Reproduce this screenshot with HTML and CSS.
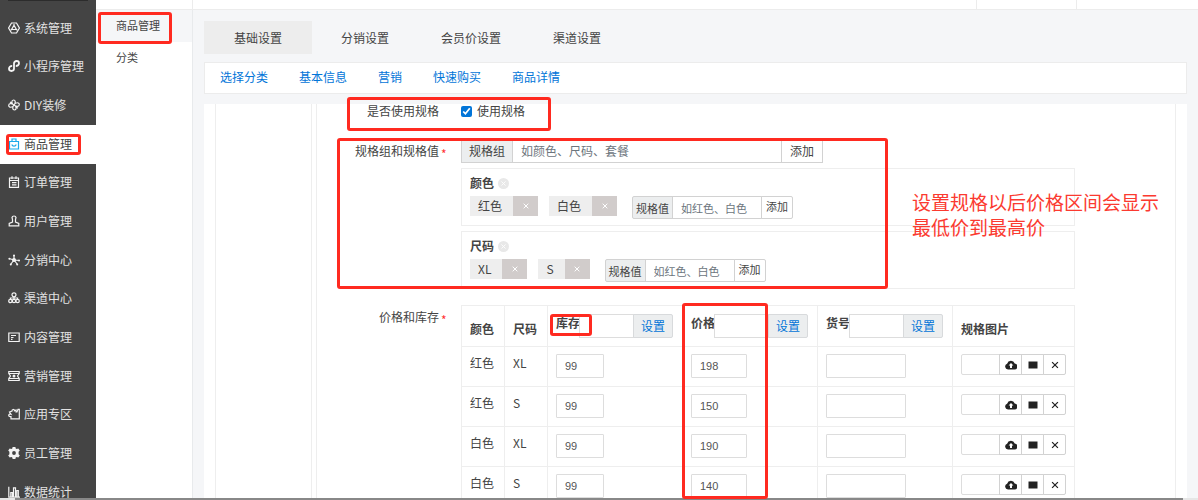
FILE: index.html
```html
<!DOCTYPE html>
<html lang="zh-CN">
<head>
<meta charset="utf-8">
<title>商品管理</title>
<link rel="stylesheet" href="styles.css">
</head>
<body>
<svg class="sprite" aria-hidden="true">
  <symbol id="i-upload" viewBox="0 0 12 12"><path fill="currentColor" fill-rule="evenodd" d="M3 10.500a3 3 0 0 1-.9-5.800A4 4 0 0 1 9.700 4.500 3 3 0 0 1 9 10.500zM6 4 3.600 6.600H5V9H7V6.600H8.400z"/></symbol>
  <symbol id="i-image" viewBox="0 0 12 12"><path fill="currentColor" d="M1.500 2.500h9v7h-9z"/></symbol>
  <symbol id="i-x" viewBox="0 0 12 12"><path fill="none" stroke="currentColor" stroke-width="1.500" d="M2.500 2.500l7 7M9.500 2.500l-7 7"/></symbol>
</svg>
<div class="page">
  <div class="app">
    <nav class="sidebar" aria-label="主菜单">
      <div class="side-cap"></div>
      <ul class="menu">
        <li><a href="#"><svg viewBox="0 0 12 12"><path d="M3.500 1h5L11.400 6 8.500 11h-5L.6 6z"/><path d="M6 3.200 8.400 7.500H3.600zM6 2v2M2.600 8.300l1.600-1.300M9.400 8.300l-1.600-1.300"/></svg>系统管理</a></li>
        <li><a href="#"><svg class="bold" viewBox="0 0 12 12"><path d="M4.200 5.800C2.400 5.800 1 6.900 1 8.600s1.300 2.400 2.400 2.400C5 11 6 10 6 8.600V3.400C6 2 7.200 1 8.600 1S11 2 11 3.300c0 1.500-1.400 2.700-3.200 2.700"/></svg>小程序管理</a></li>
        <li><a href="#"><svg viewBox="0 0 12 12"><path d="M6 6C3 4.500 3.500 1 5.500 1S8 3.500 6 6c1.500-3 5.300-2.800 5.300-.5S8.500 8 6 6c3 1.500 2.500 5 .5 5S4 8.500 6 6C4.500 9 .7 8.800.7 6.500S3.500 4 6 6M2 3l2 1.200M10 9.200 8 8"/></svg>DIY装修</a></li>
        <li><a class="active" href="#"><svg viewBox="0 0 12 12"><path d="M1.500 3.500h9v7.500h-9zM4 3.500V1h4v2.500M3.800 6.500c.6 2.200 3.800 2.200 4.400 0"/></svg>商品管理</a></li>
        <li><a href="#"><svg viewBox="0 0 12 12"><path d="M1.500 2h9v9.300h-9zM4 .3v2.700M8 .3v2.700M1.500 4.500h9M4 6.700h4.500M4 8.900h4.500"/></svg>订单管理</a></li>
        <li><a href="#"><svg viewBox="0 0 12 12"><path d="M4.500 7V4.500L4 2.500C4.500.5 7.500.5 8 2.500L7.500 4.500V7L10.800 8.500V10.800H1.200V8.500z"/></svg>用户管理</a></li>
        <li><a href="#"><svg viewBox="0 0 12 12"><path d="M6 1v5M6 6 1 4.500M6 6l-3.500 4.500M6 6l3.500 4.500M6 6l5.500.5"/><circle class="fill" cx="6" cy="6" r="2"/><circle class="fill" cx="6" cy="1.500" r="1"/><circle class="fill" cx="1.400" cy="4.700" r="1"/><circle class="fill" cx="2.800" cy="10.500" r="1"/><circle class="fill" cx="9.200" cy="10.500" r="1"/><circle class="fill" cx="11" cy="6.500" r="1"/></svg>分销中心</a></li>
        <li><a href="#"><svg viewBox="0 0 12 12"><circle cx="6" cy="2.800" r="2"/><circle cx="2.400" cy="9" r="1.700"/><circle cx="6" cy="9" r="1.700"/><circle cx="9.600" cy="9" r="1.700"/><path d="M6 5v2M2.400 7V6h7.200v1"/></svg>渠道中心</a></li>
        <li><a href="#"><svg viewBox="0 0 12 12"><path d="M.8 2h10.400v8.500H.8zM3 4.500h5M3 6.500h2.500M3 8.300h1.500"/></svg>内容管理</a></li>
        <li><a href="#"><svg viewBox="0 0 12 12"><path d="M.8 1.500h10.400v2L9.500 6l1.700 2.500v2H.8v-2L2.500 6 .8 3.500zM1 3.500h10M1 8.500h10"/><circle class="fill" cx="6" cy="6" r="1.500"/></svg>营销管理</a></li>
        <li><a href="#"><svg viewBox="0 0 12 12"><path d="M3 10.800V8.500C1.500 9 .5 8 .8 7S2 6 3 6.300L1.500 4 4 3c0-2 2.500-2 2.500-.2L8 2V4h1l1-2.700h1.300v9.500z"/></svg>应用专区</a></li>
        <li><a href="#"><svg viewBox="0 0 12 12"><path class="fill" fill-rule="evenodd" d="M4.600 0h2.800l.3 1.600 1 .5 1.600-.7 1.500 2.200-1.200 1.200v2.400l1.200 1.200-1.500 2.200-1.600-.7-1 .5-.3 1.600H4.600l-.3-1.600-1-.5-1.600.7L.2 8.400l1.200-1.200V4.800L.2 3.600l1.500-2.200 1.600.7 1-.5zM6 4.100a1.900 1.900 0 1 0 0 3.800 1.900 1.900 0 0 0 0-3.800z"/></svg>员工管理</a></li>
        <li><a href="#"><svg viewBox="0 0 12 12"><path d="M.8.8v10.400H12M2.800 11V6.500h1.500V11M5.500 11V1.800h2V11M8.800 11V4.500h1.500V11"/></svg>数据统计</a></li>
      </ul>
    </nav>
    <div class="workspace">
      <header class="topbar"><div class="top-a"></div><div class="top-b"></div><div class="top-c"></div><div class="top-d"></div></header>
      <div class="body">
        <nav class="subnav" aria-label="商品">
          <a class="current" href="#">商品管理</a>
          <a href="#">分类</a>
        </nav>
        <main class="main">
          <nav class="tabs" aria-label="设置">
            <a class="current" href="#">基础设置</a><a href="#">分销设置</a><a href="#">会员价设置</a><a href="#">渠道设置</a>
          </nav>
          <nav class="anchors" aria-label="分区">
            <a href="#">选择分类</a><a href="#">基本信息</a><a href="#">营销</a><a href="#">快速购买</a><a href="#">商品详情</a>
          </nav>
          <div class="panel">
            <div class="panel-side"></div>
            <form class="form">
              <div class="row row-use">
                <span class="label">是否使用规格</span>
                <label class="check"><input type="checkbox" checked>使用规格</label>
              </div>
              <div class="row row-spec">
                <label class="label required" for="group">规格组和规格值</label>
                <div class="field">
                  <div class="group group-main">
                    <span class="addon">规格组</span><input id="group" type="text" placeholder="如颜色、尺码、套餐"><button type="button">添加</button>
                  </div>
                  <section class="spec">
                    <h3>颜色<button type="button" class="remove" aria-label="删除颜色"><svg><use href="#i-x"/></svg></button></h3>
                    <div class="values">
                      <span class="tag"><span>红色</span><button type="button" aria-label="删除红色"><svg><use href="#i-x"/></svg></button></span>
                      <span class="tag"><span>白色</span><button type="button" aria-label="删除白色"><svg><use href="#i-x"/></svg></button></span>
                      <div class="group group-value"><label class="addon" for="v1">规格值</label><input id="v1" type="text" placeholder="如红色、白色"><button type="button">添加</button></div>
                    </div>
                  </section>
                  <section class="spec">
                    <h3>尺码<button type="button" class="remove" aria-label="删除尺码"><svg><use href="#i-x"/></svg></button></h3>
                    <div class="values">
                      <span class="tag"><span>XL</span><button type="button" aria-label="删除XL"><svg><use href="#i-x"/></svg></button></span>
                      <span class="tag"><span>S</span><button type="button" aria-label="删除S"><svg><use href="#i-x"/></svg></button></span>
                      <div class="group group-value"><label class="addon" for="v2">规格值</label><input id="v2" type="text" placeholder="如红色、白色"><button type="button">添加</button></div>
                    </div>
                  </section>
                </div>
              </div>
              <div class="row">
                <span class="label required">价格和库存</span>
                <div class="field">
                  <table class="stock">
                    <colgroup><col class="c-spec"><col class="c-spec"><col class="c-set"><col class="c-set"><col class="c-set"><col></colgroup>
                    <thead>
                      <tr>
                        <th>颜色</th><th>尺码</th>
                        <th><div class="batch"><label for="b1">库存</label><input id="b1" type="text"><button type="button">设置</button></div></th>
                        <th><div class="batch"><label for="b2">价格</label><input id="b2" type="text"><button type="button">设置</button></div></th>
                        <th><div class="batch"><label for="b3">货号</label><input id="b3" type="text"><button type="button">设置</button></div></th>
                        <th>规格图片</th>
                      </tr>
                    </thead>
                    <tbody>
                      <tr><td>红色</td><td>XL</td><td><input class="w-stock" aria-label="库存" value="99"></td><td><input class="w-price" aria-label="价格" value="198"></td><td><input class="w-sku" aria-label="货号"></td><td><div class="pic"><input aria-label="规格图片"><button type="button" aria-label="上传"><svg><use href="#i-upload"/></svg></button><button type="button" aria-label="选择图片"><svg><use href="#i-image"/></svg></button><button type="button" aria-label="清除"><svg><use href="#i-x"/></svg></button></div></td></tr>
                      <tr><td>红色</td><td>S</td><td><input class="w-stock" aria-label="库存" value="99"></td><td><input class="w-price" aria-label="价格" value="150"></td><td><input class="w-sku" aria-label="货号"></td><td><div class="pic"><input aria-label="规格图片"><button type="button" aria-label="上传"><svg><use href="#i-upload"/></svg></button><button type="button" aria-label="选择图片"><svg><use href="#i-image"/></svg></button><button type="button" aria-label="清除"><svg><use href="#i-x"/></svg></button></div></td></tr>
                      <tr><td>白色</td><td>XL</td><td><input class="w-stock" aria-label="库存" value="99"></td><td><input class="w-price" aria-label="价格" value="190"></td><td><input class="w-sku" aria-label="货号"></td><td><div class="pic"><input aria-label="规格图片"><button type="button" aria-label="上传"><svg><use href="#i-upload"/></svg></button><button type="button" aria-label="选择图片"><svg><use href="#i-image"/></svg></button><button type="button" aria-label="清除"><svg><use href="#i-x"/></svg></button></div></td></tr>
                      <tr><td>白色</td><td>S</td><td><input class="w-stock" aria-label="库存" value="99"></td><td><input class="w-price" aria-label="价格" value="140"></td><td><input class="w-sku" aria-label="货号"></td><td><div class="pic"><input aria-label="规格图片"><button type="button" aria-label="上传"><svg><use href="#i-upload"/></svg></button><button type="button" aria-label="选择图片"><svg><use href="#i-image"/></svg></button><button type="button" aria-label="清除"><svg><use href="#i-x"/></svg></button></div></td></tr>
                    </tbody>
                  </table>
                </div>
              </div>
            </form>
          </div>
        </main>
      </div>
    </div>
  </div>
  <div class="hscroll"><div class="thumb"></div></div>

  <div class="mark mark-subnav"></div>
  <div class="mark mark-menu"></div>
  <div class="mark mark-use"></div>
  <div class="mark mark-spec"></div>
  <div class="mark mark-stock"></div>
  <div class="mark mark-price"></div>
  <p class="note">设置规格以后价格区间会显示<br>最低价到最高价</p>
</div>
</body>
</html>
```
FILE: styles.css
```css
* { box-sizing: border-box; }

body {
  margin: 0;
  font: 12px/14px "Noto Sans CJK SC", "Liberation Sans", sans-serif;
  color: #444;
  background: #fff;
}

a { color: inherit; text-decoration: none; }
ul { list-style: none; margin: 0; padding: 0; }
input, button { font: inherit; color: inherit; margin: 0; padding: 0; border-radius: 0; min-width: 0; }
button { background: #fff; border: 1px solid #ccc; }
input { background: #fff; border: 1px solid #ddd; }
input::placeholder { color: #6c757d; opacity: 1; }
svg { display: block; width: 12px; height: 12px; }
.sprite { position: absolute; width: 0; height: 0; }

.page {
  position: relative;
  display: flex;
  flex-direction: column;
  height: 100vh;
  overflow: hidden;
}
.app { display: flex; flex: 1; min-height: 0; overflow: hidden; }

/* Dark main menu */
.sidebar { flex: none; width: 96px; background: #444; }
.side-cap { height: 1px; margin: 0 8px 8px; background: #2c2c2c; }
.menu { display: grid; grid-auto-rows: 39px 38px 39px; }
.menu a {
  display: flex;
  align-items: center;
  gap: 4px;
  height: 100%;
  padding: 0 0 2px 8px;
  color: #e2e2e2;
  white-space: nowrap;
}
.menu svg { flex: none; fill: none; stroke: currentColor; stroke-width: 1.2; color: #f4f4f4; }
.menu .bold { stroke-width: 1.8; }
.menu .fill { fill: currentColor; stroke: none; }
.menu .active { background: #fff; color: #444; }
.menu .active svg { color: #1ba9ea; }

.workspace { display: flex; flex-direction: column; flex: 1; min-width: 0; }
.topbar { display: flex; flex: none; height: 10px; border-bottom: 1px solid #ececec; }
.topbar > div { border-right: 1px solid #ececec; }
.topbar .top-a { width: 97px; }
.topbar .top-b { flex: 1; }
.topbar .top-c { width: 100px; }
.topbar .top-d { width: 121px; border: 0; }
.body { display: flex; flex: 1; min-height: 0; }

.subnav { flex: none; width: 97px; border-right: 1px solid #e8eaec; font-size: 11px; }
.subnav a { display: flex; align-items: center; height: 32px; padding: 0 0 2px 20px; }
.subnav .current { background: #f5f6f8; }

.main {
  display: flex;
  flex-direction: column;
  flex: 1;
  min-width: 0;
  padding: 11px 11px 0;
  background: #f5f6f8;
}

.tabs { display: flex; flex: none; height: 33px; }
.tabs a { display: flex; align-items: center; padding: 0 26px; }
.tabs .current { padding: 0 30px; margin-right: 3px; background: #ededed; }

.anchors {
  display: flex;
  flex: none;
  align-items: center;
  gap: 31px;
  height: 32px;
  margin: 8px 0 10px;
  padding: 0 0 2px 15px;
  border: 1px solid #ececec;
  background: #fff;
  color: #0275d8;
}

.panel { display: flex; flex: 1; gap: 4px; padding: 0 11px; background: #fff; min-height: 0; }
.panel-side { flex: none; width: 97px; border: solid #eee; border-width: 0 1px; }
.form { flex: 1; min-width: 0; border: solid #eee; border-width: 0 1px; }

.row { display: grid; grid-template-columns: 122px 1fr; column-gap: 22px; }
.row-use { height: 35px; }
.row-spec { margin-bottom: 16px; }
.label { position: relative; padding-top: 5px; text-align: right; white-space: nowrap; }
.row-use .label { padding-top: 0; }
.required::after { content: "*"; position: absolute; left: 100%; top: 8px; margin-left: 2px; color: #f33; }
.check { display: flex; gap: 5px; height: 14px; }
.check input { width: 11px; height: 11px; margin-top: 2px; accent-color: #0275d8; }
.field { margin-right: 100px; }

/* Joined addon + input + button */
.group { display: flex; color: #444; }
.addon, .group input, .group button { border: 1px solid #d2d2d2; }
.addon { display: flex; align-items: center; justify-content: center; background: #eceeef; }
.group input { flex: 1; margin-left: -1px; padding: 0 8px; }
.group button { margin-left: -1px; }
.group-main { width: 362px; height: 24px; }
.group-main .addon, .group-main input, .group-main button { border-top-color: #eee; }
.group-main .addon { width: 52px; }
.group-main button { width: 42px; }
.group-value { width: 161px; height: 23px; margin-left: 4px; font-size: 11px; }
.group-value .addon { width: 41px; border-radius: 2px 0 0 2px; }
.group-value button { width: 32px; padding-bottom: 4px; border-radius: 0 2px 2px 0; }

.spec { height: 58px; margin-top: 5px; padding: 7px 8px; border: 1px solid #eee; }
.spec h3 { display: flex; align-items: center; gap: 4px; height: 14px; margin: 0 0 6px; font-size: 12px; }
.remove { display: grid; place-items: center; width: 11px; height: 11px; border: 0; border-radius: 50%; background: #e8e8e8; color: #fff; }
.remove svg { width: 7px; height: 7px; }
.values { display: flex; align-items: flex-start; gap: 11px; }
.tag { display: flex; height: 20px; background: #eee; }
.tag > span { display: flex; align-items: center; padding: 0 11px 0 8px; }
.tag button { display: grid; place-items: center; width: 25px; border: 0; background: #d1cccb; color: #fff; }
.tag svg { width: 8px; height: 8px; }

.stock { width: 100%; table-layout: fixed; border-collapse: collapse; }
.c-spec { width: 43px; }
.c-set { width: 135px; }
.stock th, .stock td { height: 40px; padding: 8px 0 0 8px; border: 1px solid #eee; text-align: left; vertical-align: top; }
.stock td { padding-top: 7px; line-height: 18px; }
.stock th { height: 41px; line-height: 30px; white-space: nowrap; }
.stock td > input {
  display: block;
  height: 24px;
  padding: 0 8px;
  border-radius: 1px;
  font: 11px/14px "Liberation Sans", sans-serif;
  color: #555;
}
.w-stock { width: 48px; }
.w-price { width: 56px; }
.w-sku { width: 80px; }

.batch { display: flex; height: 24px; line-height: 17px; }
.batch label { width: 23px; }
.batch input { width: 55px; }
.batch button {
  width: 40px;
  margin-left: -1px;
  padding-bottom: 2px;
  border-color: #d8dadc;
  border-radius: 0 2px 2px 0;
  background: #eceeef;
  color: #0275d8;
  font-weight: 400;
}

.pic { display: flex; height: 21px; }
.pic input { width: 39px; border-radius: 2px 0 0 2px; }
.pic button { display: grid; place-items: center; width: 23px; margin-left: -1px; border-color: #d2d2d2; color: #222; }
.pic button:last-child { border-radius: 0 2px 2px 0; }
.pic button:last-child svg { width: 10px; height: 10px; }

.hscroll { flex: none; height: 2px; padding: 0 15px; background: #e6e6e6; }
.thumb { height: 2px; background: #888; }

/* Red callouts drawn over the screen */
.mark { position: absolute; border: 3px solid #ff2a20; border-radius: 3px; pointer-events: none; }
.mark-subnav { left: 98px; top: 12px; width: 74px; height: 32px; }
.mark-menu { left: 6px; top: 134px; width: 75px; height: 21px; }
.mark-use { left: 347px; top: 97px; width: 204px; height: 34px; }
.mark-spec { left: 337px; top: 138px; width: 551px; height: 151px; }
.mark-stock { left: 550px; top: 314px; width: 42px; height: 22px; }
.mark-price { left: 682px; top: 303px; width: 86px; height: 196px; }
.note { position: absolute; left: 912px; top: 189px; margin: 0; font-size: 19px; line-height: 25px; color: #fb3a30; white-space: nowrap; }
```
